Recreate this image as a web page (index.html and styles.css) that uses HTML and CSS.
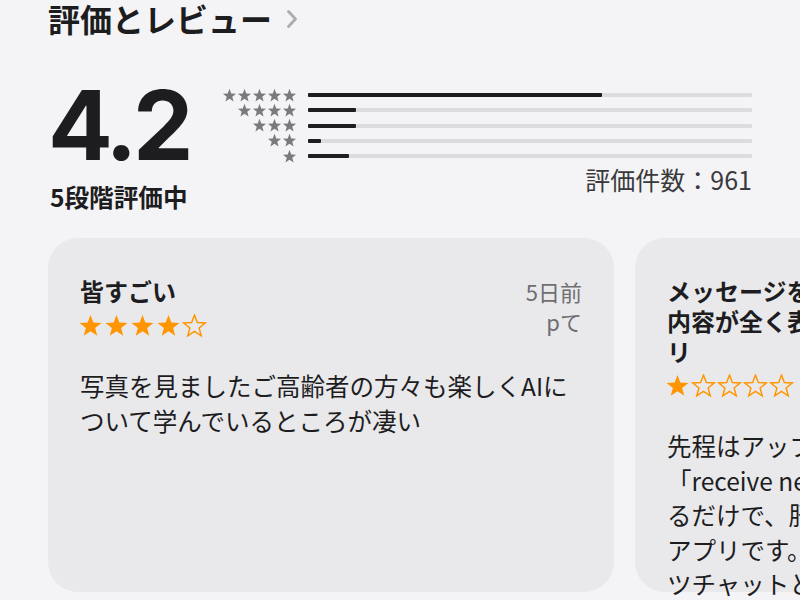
FILE: index.html
```html
<!DOCTYPE html>
<html lang="ja">
<head>
<meta charset="utf-8">
<title>評価とレビュー</title>
<link rel="stylesheet" href="styles.css">
</head>
<body>
<svg class="defs" width="0" height="0" aria-hidden="true">
  <defs>
    <symbol id="star" viewBox="-1 -1 26 25">
      <polygon points="12,0 14.96,7.92 23.41,8.29 16.79,13.56 19.05,21.71 12,17.04 4.95,21.71 7.21,13.56 0.59,8.29 9.04,7.92"/>
    </symbol>
  </defs>
</svg>
<main class="page">
  <header class="section-head">
    <h2 class="section-title">評価とレビュー</h2>
    <svg class="chevron" width="12" height="20" viewBox="0 0 12 20" aria-hidden="true"><polyline points="2.5,2.5 9.5,10 2.5,17.5"/></svg>
  </header>

  <section class="summary">
    <div class="score">
      <div class="score-value">4.2</div>
      <div class="score-caption">5段階評価中</div>
    </div>
    <div class="histogram">
      <div class="hrow">
        <span class="hstars"><svg><use href="#star"/></svg><svg><use href="#star"/></svg><svg><use href="#star"/></svg><svg><use href="#star"/></svg><svg><use href="#star"/></svg></span>
        <span class="bar"><span class="fill" style="width:66.2%"></span></span>
      </div>
      <div class="hrow">
        <span class="hstars"><svg><use href="#star"/></svg><svg><use href="#star"/></svg><svg><use href="#star"/></svg><svg><use href="#star"/></svg></span>
        <span class="bar"><span class="fill" style="width:10.8%"></span></span>
      </div>
      <div class="hrow">
        <span class="hstars"><svg><use href="#star"/></svg><svg><use href="#star"/></svg><svg><use href="#star"/></svg></span>
        <span class="bar"><span class="fill" style="width:10.8%"></span></span>
      </div>
      <div class="hrow">
        <span class="hstars"><svg><use href="#star"/></svg><svg><use href="#star"/></svg></span>
        <span class="bar"><span class="fill" style="width:3%"></span></span>
      </div>
      <div class="hrow">
        <span class="hstars"><svg><use href="#star"/></svg></span>
        <span class="bar"><span class="fill" style="width:9.2%"></span></span>
      </div>
      <div class="count">評価件数：961</div>
    </div>
  </section>

  <section class="reviews">
    <article class="card">
      <div class="card-head">
        <div class="card-main">
          <h3 class="card-title">皆すごい</h3>
          <div class="rstars">
            <svg class="on"><use href="#star"/></svg><svg class="on"><use href="#star"/></svg><svg class="on"><use href="#star"/></svg><svg class="on"><use href="#star"/></svg><svg class="off"><use href="#star"/></svg>
          </div>
        </div>
        <div class="card-meta">
          <div>5日前</div>
          <div>pて</div>
        </div>
      </div>
      <p class="card-body">写真を見ましたご高齢者の方々も楽しくAIについて学んでいるところが凄い</p>
    </article>

    <article class="card">
      <div class="card-head">
        <div class="card-main">
          <h3 class="card-title">メッセージを送信しても相手側にその内容が全く表示されないチャットアプリ</h3>
          <div class="rstars">
            <svg class="on"><use href="#star"/></svg><svg class="off"><use href="#star"/></svg><svg class="off"><use href="#star"/></svg><svg class="off"><use href="#star"/></svg><svg class="off"><use href="#star"/></svg>
          </div>
        </div>
        <div class="card-meta">
          <div>2週間前</div>
          <div>mk</div>
        </div>
      </div>
      <p class="card-body">先程はアップストアからダウンロードしたら「receive new message」と通知が表示されるだけで、肝心のメッセージ内容が読めないアプリです。翻訳機能付きの便利なコンテンツチャットとして使えると思っていました。</p>
    </article>
  </section>
</main>
</body>
</html>
```

FILE: styles.css
```css
html, body {
  margin: 0;
  padding: 0;
  overflow: hidden;
}

body {
  background: #f4f4f6;
  color: #1d1d1f;
  font-family: "Noto Sans CJK JP", "Noto Sans", sans-serif;
}

.defs {
  position: absolute;
  width: 0;
  height: 0;
}

.page {
  padding: 0 48px;
}

.section-head {
  display: flex;
  align-items: center;
  gap: 14px;
  height: 36px;
}

.section-title {
  margin: 0;
  font-size: 32px;
  line-height: 36px;
  font-weight: 700;
  color: #1d1d1f;
}

.chevron {
  fill: none;
  stroke: #ababb0;
  stroke-width: 2.8;
  stroke-linecap: round;
  stroke-linejoin: round;
  margin-top: 2px;
}

.summary {
  display: flex;
  margin-top: 41px;
}

.score {
  width: 173px;
  flex: none;
}

.score-value {
  font-family: Inter, "Liberation Sans", sans-serif;
  font-weight: 700;
  font-size: 96px;
  line-height: 96px;
  letter-spacing: -0.045em;
  color: #1d1d1f;
}

.score-caption {
  margin-top: 8px;
  padding-left: 2px;
  font-size: 24.6px;
  line-height: 30px;
  font-weight: 700;
  color: #1d1d1f;
}

.histogram {
  flex: 1;
  padding-top: 10.4px;
}

.hrow {
  display: flex;
  align-items: center;
  height: 15.25px;
}

.hstars {
  width: 76px;
  flex: none;
  display: flex;
  justify-content: flex-end;
}

.hstars svg {
  width: 15px;
  height: 15px;
  fill: #7a7a7e;
}

.bar {
  flex: 1;
  margin-left: 11px;
  height: 4px;
  background: #dcdcdf;
  border-radius: 1px;
  display: flex;
}

.fill {
  height: 100%;
  background: #1d1d1f;
  border-radius: 1px;
}

.count {
  text-align: right;
  font-size: 25px;
  line-height: 30px;
  color: #3a3a3c;
}

.reviews {
  display: flex;
  gap: 21px;
  margin-top: 27px;
  margin-right: -48px;
  padding-bottom: 20px;
  overflow: hidden;
}

.card {
  flex: none;
  width: 566px;
  height: 354px;
  box-sizing: border-box;
  padding: 38px 32px 0;
  border-radius: 30px;
  background: #e9e9eb;
}

.card-head {
  display: flex;
  align-items: flex-start;
  gap: 12px;
}

.card-main {
  flex: 1;
  min-width: 0;
}

.card-title {
  margin: 0;
  font-size: 24px;
  line-height: 30px;
  font-weight: 700;
  color: #1d1d1f;
}

.rstars {
  display: flex;
  gap: 1px;
  margin-top: 7.9px;
  margin-left: -2px;
  height: 24px;
}

.rstars svg {
  width: 25px;
  height: 24px;
}

.rstars .on {
  fill: #ff9500;
}

.rstars .off {
  fill: none;
  stroke: #ff9500;
  stroke-width: 1.5;
  stroke-linejoin: miter;
}

.card-meta {
  flex: none;
  text-align: right;
  font-size: 22px;
  line-height: 30px;
  color: #6e6e73;
}

.card-body {
  margin: 31.4px 0 0;
  max-width: 496px;
  font-size: 24.5px;
  line-height: 34.5px;
  color: #1d1d1f;
}
```
